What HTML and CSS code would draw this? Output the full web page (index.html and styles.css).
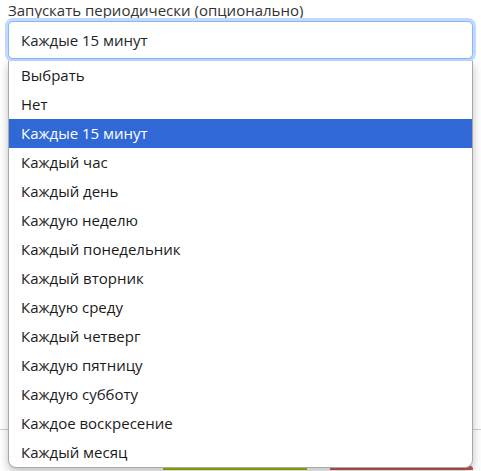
FILE: index.html
```html
<!DOCTYPE html>
<html lang="ru">
<head>
<meta charset="utf-8">
<title>Расписание</title>
<link rel="stylesheet" href="styles.css">
</head>
<body>
<div class="form">
  <label class="label">Запускать периодически (опционально)</label>
  <div class="field">
    <div class="select">Каждые 15 минут</div>
    <ul class="dropdown">
      <li>Выбрать</li>
      <li>Нет</li>
      <li class="active">Каждые 15 минут</li>
      <li>Каждый час</li>
      <li>Каждый день</li>
      <li>Каждую неделю</li>
      <li>Каждый понедельник</li>
      <li>Каждый вторник</li>
      <li>Каждую среду</li>
      <li>Каждый четверг</li>
      <li>Каждую пятницу</li>
      <li>Каждую субботу</li>
      <li>Каждое воскресение</li>
      <li>Каждый месяц</li>
    </ul>
  </div>
  <div class="spacer"><span class="check"></span></div>
  <div class="footer">
    <span class="btn btn-save"></span>
    <span class="btn btn-cancel"></span>
  </div>
</div>
</body>
</html>
```
FILE: styles.css
```css
html, body {
  margin: 0;
  padding: 0;
  background: #fff;
  overflow: hidden;
}

body {
  font-family: "Open Sans", "Noto Sans", sans-serif;
  font-size: 15px;
  color: #212529;
  height: 471px;
}

.form {
  padding: 0 8px;
  display: flex;
  flex-direction: column;
}

.label {
  display: block;
  font-size: 15px;
  line-height: 21px;
  height: 21px;
  color: #333;
}

.field {
  position: relative;
}

.select {
  height: 36px;
  line-height: 37px;
  padding: 0 12px;
  border: 1px solid #86b7fe;
  border-radius: 5px;
  box-shadow: 0 0 0 3px #c2d8fc;
  background: #fff;
  font-size: 15px;
}

/* open option list */
.dropdown {
  position: absolute;
  top: 40px;
  left: 0;
  right: 0;
  margin: 0;
  padding: 0;
  list-style: none;
  background: #fff;
  border: 1px solid #a9a9a9;
  border-top: none;
  border-radius: 0 0 8px 8px;
  box-shadow: 0 4px 10px rgba(0, 0, 0, 0.25);
  z-index: 2;
  overflow: hidden;
}

.dropdown li {
  height: 29px;
  line-height: 29px;
  padding: 0 12px;
  font-size: 15px;
  color: #1a1a1a;
}

.dropdown li.active {
  background: #3068d6;
  color: #fff;
}

.spacer {
  height: 370px;
  position: relative;
}

.check {
  position: absolute;
  left: 0;
  top: 345px;
  width: 2px;
  height: 12px;
  background: #3068d6;
}

.footer {
  margin: 0 -8px;
  border-top: 1px solid #cfcfcf;
  padding: 36px 8px 0 163px;
  display: flex;
  gap: 23px;
}

.btn {
  display: block;
  width: 144px;
  height: 4px;
  border-radius: 3px 3px 0 0;
}

.btn-save {
  background: #9bbf00;
}

.btn-cancel {
  background: #c0574f;
}
```
